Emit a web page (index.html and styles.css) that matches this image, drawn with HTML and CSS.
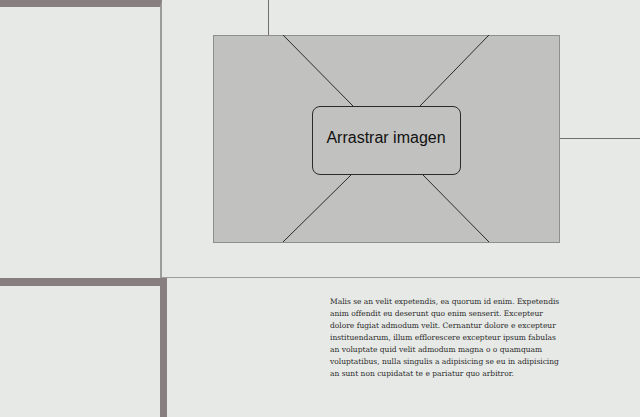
FILE: index.html
```html
<!DOCTYPE html>
<html lang="es">
<head>
    <meta charset="UTF-8">
    <meta name="viewport" content="width=device-width, initial-scale=1.0">
    <title>Wireframe</title>
    <link rel="stylesheet" href="styles.css">
</head>
<body>
    <div class="page">
        <div class="row row-top">
            <div class="side side-top"></div>
            <section class="hero">
                <div class="dropzone">
                    <svg class="dropzone-lines" viewBox="0 0 347 208" preserveAspectRatio="none">
                        <line x1="70" y1="0" x2="140" y2="71"/>
                        <line x1="276" y1="0" x2="207" y2="71"/>
                        <line x1="138" y1="140" x2="70" y2="207"/>
                        <line x1="210" y1="140" x2="276" y2="207"/>
                    </svg>
                    <div class="drop-label">Arrastrar imagen</div>
                </div>
            </section>
        </div>
        <div class="row row-bottom">
            <div class="side side-bottom"></div>
            <section class="content">
                <p class="body-text">Malis se an velit expetendis, ea quorum id enim. Expetendis anim offendit eu deserunt quo enim senserit. Excepteur dolore fugiat admodum velit. Cernantur dolore e excepteur instituendarum, illum efflorescere excepteur ipsum fabulas an voluptate quid velit admodum magna o o quamquam voluptatibus, nulla singulis a adipisicing se eu in adipisicing an sunt non cupidatat te e pariatur quo arbitror.</p>
            </section>
        </div>
    </div>
</body>
</html>
```

FILE: styles.css
```css
/* Wireframe layout */
body {
    margin: 0;
    padding: 0;
    background-color: #e7e9e6;
    font-family: "DejaVu Serif", serif;
}
.page {
    width: 640px;
    height: 417px;
    overflow: hidden;
}
.row {
    display: flex;
}
.row-top {
    height: 278px;
}
.row-bottom {
    height: 139px;
}
.side {
    flex: none;
    width: 160px;
    background-color: #e7e9e6;
}
.side-top {
    border-top: 7px solid #877f7f;
    border-right: 2px solid #9c9c9b;
}
.side-bottom {
    border-top: 8px solid #877f7f;
    border-right: 7px solid #877f7f;
}
.hero {
    flex: 1;
    border-bottom: 1px solid #9c9c9b;
    padding: 35px 0 0 51px;
}
.dropzone {
    position: relative;
    width: 345px;
    height: 206px;
    background-color: #c1c2bf;
    border: 1px solid #8f8f8f;
    display: flex;
    align-items: center;
    justify-content: center;
}
/* connector lines */
.dropzone::before {
    content: "";
    position: absolute;
    left: 54px;
    top: -36px;
    width: 1px;
    height: 35px;
    background-color: #6f6f6f;
}
.dropzone::after {
    content: "";
    position: absolute;
    left: 346px;
    top: 102px;
    width: 81px;
    height: 1px;
    background-color: #6f6f6f;
}
.dropzone-lines {
    position: absolute;
    left: -1px;
    top: -1px;
    width: 347px;
    height: 208px;
}
.dropzone-lines line {
    stroke: #2b2b2b;
    stroke-width: 1;
}
.drop-label {
    position: relative;
    box-sizing: border-box;
    width: 149px;
    height: 69px;
    margin: 2px 0 0 -1px;
    border: 1px solid #2b2b2b;
    border-radius: 8px;
    background-color: #c1c2bf;
    display: flex;
    align-items: center;
    justify-content: center;
    padding-bottom: 5px;
    font-family: "Liberation Sans", Arial, sans-serif;
    font-size: 16px;
    color: #111;
}
.content {
    flex: 1;
    padding: 18px 0 0 163px;
}
.body-text {
    margin: 0;
    width: 232px;
    font-size: 7.5px;
    line-height: 12px;
    color: #2a2a2a;
}
```
